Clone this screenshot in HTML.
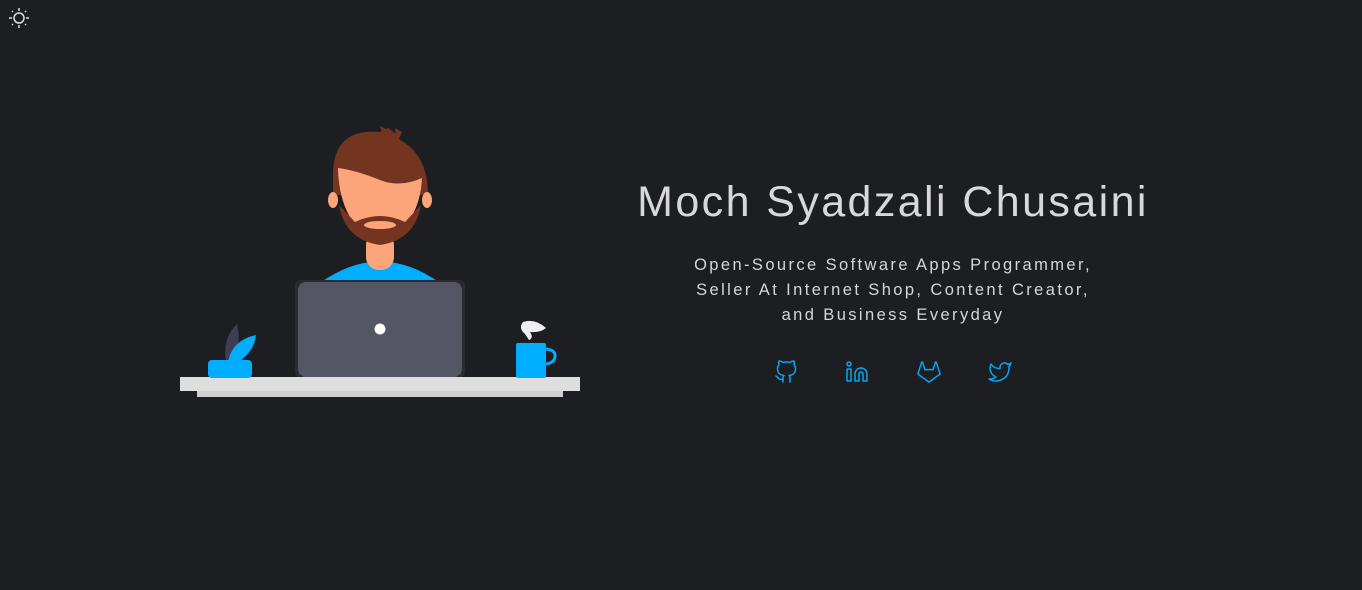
<!DOCTYPE html>
<html><head><meta charset="utf-8"><style>
html,body{margin:0;padding:0;background:#1d1e22;width:1362px;height:590px;overflow:hidden;font-family:"Liberation Sans",sans-serif;color:#fff}
.t{position:absolute;left:600px;width:586px;text-align:center}
h1{position:absolute;margin:0;top:178px;left:600px;width:586px;text-align:center;font-weight:normal;font-size:43px;letter-spacing:2.4px;color:#d8d8d8}
.s{top:253px;font-size:16.5px;line-height:25px;letter-spacing:2.4px;color:#d6d6d6}
</style></head><body>
<svg width="1362" height="590" style="position:absolute;left:0;top:0">
<g stroke="#ddd" stroke-width="1.5" fill="none"><circle cx="19" cy="18" r="5"/>
<path d="M19 8v3M19 25v3M9 18h3M26 18h3M12 11l1 1M25 24l1 1M12 25l1-1M25 12l1-1"/></g>
<path d="M320 283 Q380 240 440 283Z" fill="#00aeff"/>
<rect x="366" y="232" width="28" height="38" rx="13" fill="#fca57a"/>
<path d="M333 175 Q333 128 380 132 L388 128 Q395 132 400 140 Q428 155 428 195 L333 195Z" fill="#73351f"/>
<path d="M380 126 L388 130 L385 142Z M395 128 L402 132 L396 145Z" fill="#73351f"/>
<ellipse cx="333" cy="200" rx="5" ry="8" fill="#fca57a"/>
<ellipse cx="427" cy="200" rx="5" ry="8" fill="#fca57a"/>
<path d="M338 170 Q340 225 380 245 Q420 225 422 178 Q400 188 380 180 Q355 170 338 168Z" fill="#fca57a"/>
<path d="M339 205 Q345 240 380 245 Q415 240 421 205 L405 222 Q380 210 355 222Z" fill="#73351f"/>
<ellipse cx="380" cy="225" rx="16" ry="4" fill="#fca57a"/>
<rect x="295" y="280" width="170" height="98" rx="6" fill="#2a2b30"/>
<rect x="298" y="282" width="164" height="95" rx="8" fill="#545663"/>
<circle cx="380" cy="329" r="5.5" fill="#fff"/>
<rect x="180" y="377" width="400" height="14" fill="#dedede"/>
<rect x="197" y="391" width="366" height="6" fill="#d0d0d0"/>
<path d="M237 324 Q222 338 226 362 L232 362 Q242 345 237 324Z" fill="#3f3d56"/>
<path d="M256 335 Q232 340 228 362 L238 362 Q254 352 256 335Z" fill="#00aeff"/>
<rect x="208" y="360" width="44" height="18" rx="4" fill="#00aeff"/>
<path d="M523 322 Q535 318 546 328 Q540 333 530 332 Q534 338 529 340 L525 334 Q518 328 523 322Z" fill="#eee"/>
<rect x="516" y="343" width="30" height="35" rx="2" fill="#00aeff"/>
<path d="M546 349 Q556 350 555 357 Q554 363 546 364" stroke="#00aeff" stroke-width="3" fill="none"/>
<g stroke="#0aa4f0" stroke-width="1.5" fill="none" stroke-linecap="round" stroke-linejoin="round">
<path transform="translate(774,360)" d="M9 19c-5 1.5-5-2.5-7-3m14 6v-3.87a3.37 3.37 0 0 0-.94-2.61c3.14-.35 6.440-1.54 6.44-7A5.44 5.44 0 0 0 20 4.770 5.07 5.07 0 0 0 19.91 1S18.73.65 16 2.48a13.38 13.38 0 0 0-7 0C6.27.65 5.09 1 5.09 1A5.07 5.07 0 0 0 5 4.77a5.44 5.44 0 0 0-1.5 3.78c0 5.42 3.3 6.61 6.44 7A3.37 3.37 0 0 0 9 18.13V22"/>
<g transform="translate(845,360)"><path d="M16 8a6 6 0 0 1 6 6v7h-4v-7a2 2 0 0 0-2-2 2 2 0 0 0-2 2v7h-4v-7a6 6 0 0 1 6-6z"/><rect x="2" y="9" width="4" height="12"/><circle cx="4" cy="4" r="2"/></g>
<path transform="translate(917,360)" d="M22.65 14.39L12 22.13 1.34 14.39a.84.84 0 0 1-.3-.94l1.22-3.78 2.44-7.51A.42.42 0 0 1 4.82 2a.43.43 0 0 1 .58 0 .42.42 0 0 1 .11.18l2.44 7.49h8.1l2.44-7.51A.42.42 0 0 1 18.6 2a.43.43 0 0 1 .58 0 .42.42 0 0 1 .11.18l2.44 7.51L23 13.45a.84.84 0 0 1-.35.94z"/>
<path transform="translate(988,360)" d="M23 3a10.9 10.9 0 0 1-3.14 1.53 4.48 4.48 0 0 0-7.86 3v1A10.66 10.66 0 0 1 3 4s-4 9 5 13a11.64 11.64 0 0 1-7 2c9 5 20 0 20-11.5a4.5 4.5 0 0 0-.08-.83A7.72 7.72 0 0 0 23 3z"/>
</g>
</svg>
<h1>Moch Syadzali Chusaini</h1>
<div class="t s">Open-Source Software Apps Programmer,<br>Seller At Internet Shop, Content Creator,<br>and Business Everyday</div>
</body></html>
